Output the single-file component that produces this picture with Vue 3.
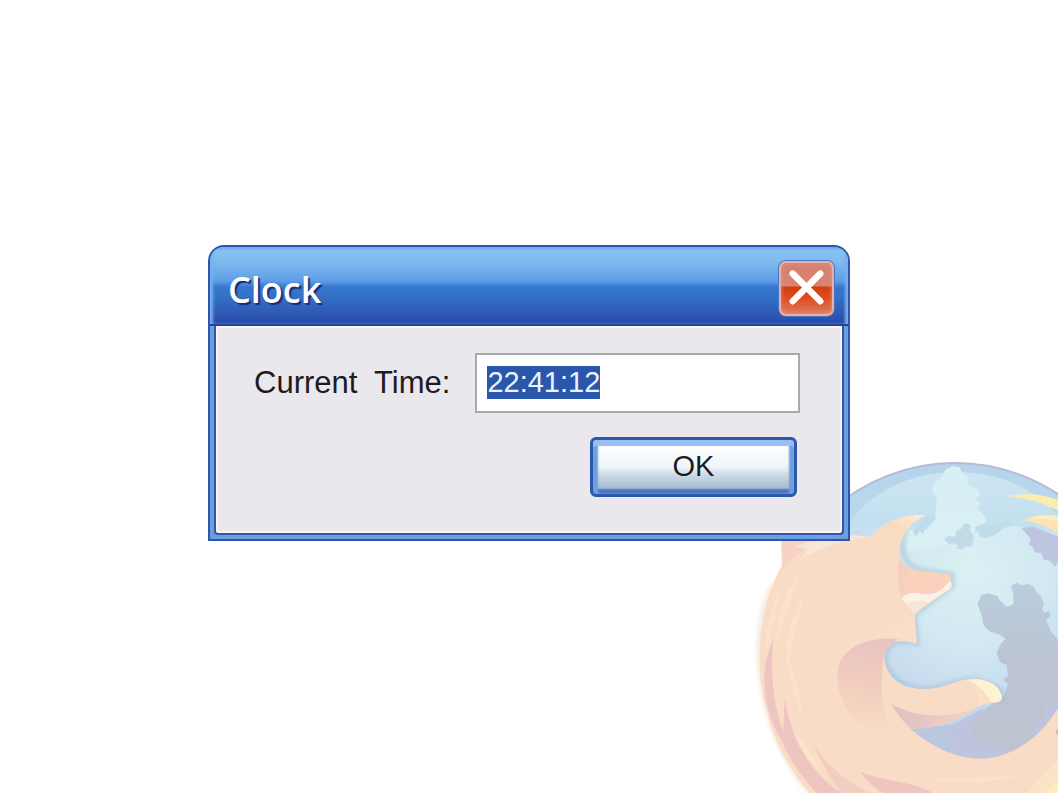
<template>
  <main class="slide">
    <svg class="firefox" viewBox="0 0 954 1029" aria-hidden="true">
      <defs>
        <radialGradient id="ocean" gradientUnits="userSpaceOnUse" cx="700" cy="360" r="560">
          <stop offset="0" stop-color="#daf1f4" />
          <stop offset="0.4" stop-color="#d3e8f2" />
          <stop offset="0.75" stop-color="#c3d9ee" />
          <stop offset="1" stop-color="#bccfe8" />
        </radialGradient>
        <linearGradient id="rim" x1="0" y1="0" x2="0" y2="1">
          <stop offset="0" stop-color="#b5d4ea" />
          <stop offset="0.3" stop-color="#c0def0" />
        </linearGradient>
        <linearGradient id="gloss" gradientUnits="userSpaceOnUse" x1="0" y1="60" x2="0" y2="300">
          <stop offset="0" stop-color="#cde5f1" />
          <stop offset="0.7" stop-color="#c3e0f0" />
          <stop offset="1" stop-color="#d9f0f4" />
        </linearGradient>
        <linearGradient id="ice" gradientUnits="userSpaceOnUse" x1="0" y1="50" x2="0" y2="280">
          <stop offset="0" stop-color="#d8eff4" />
          <stop offset="1" stop-color="#d8f1f4" />
        </linearGradient>
        <linearGradient id="land" gradientUnits="userSpaceOnUse" x1="0" y1="400" x2="0" y2="900">
          <stop offset="0" stop-color="#b9cddd" />
          <stop offset="0.5" stop-color="#bcc3d3" />
          <stop offset="1" stop-color="#bfc3d0" />
        </linearGradient>
        <linearGradient id="hollow" gradientUnits="userSpaceOnUse" x1="400" y1="570" x2="370" y2="840">
          <stop offset="0" stop-color="#e9c3c1" />
          <stop offset="0.5" stop-color="#f1cdbd" />
          <stop offset="1" stop-color="#f8dcc5" />
        </linearGradient>
        <linearGradient id="ear" gradientUnits="userSpaceOnUse" x1="540" y1="190" x2="430" y2="330">
          <stop offset="0" stop-color="#fdecd4" />
          <stop offset="0.4" stop-color="#f8dcc1" />
          <stop offset="1" stop-color="#f8dcc5" />
        </linearGradient>
        <linearGradient id="underpaw" gradientUnits="userSpaceOnUse" x1="480" y1="800" x2="720" y2="780">
          <stop offset="0" stop-color="#dfc1c3" />
          <stop offset="1" stop-color="#f6d3c0" />
        </linearGradient>
        <filter id="soft" x="-10%" y="-10%" width="120%" height="120%">
          <feGaussianBlur stdDeviation="7" />
        </filter>
        <clipPath id="sphere">
          <circle cx="645" cy="597" r="560" />
        </clipPath>
      </defs>

      <!-- globe -->
      <circle cx="645" cy="597" r="559" fill="url(#rim)" />
      <g clip-path="url(#sphere)">
        <path d="M330 215 C400 120 520 66 650 66 C780 66 895 120 960 205 V300 H330Z" fill="url(#gloss)" />
        <path d="M330 245 C480 205 590 275 690 255 C790 205 860 220 960 290 V1029 H330Z" fill="url(#ocean)" />
        <path
          d="M618 58 L640 48 L660 52 L666 72 L684 82 L686 108 L712 116 L720 134 L708 148 L720 160 L712 176 L730 192 L740 212 L724 226 L706 228 L704 250 L650 280 L500 300 L510 240 L560 240 L586 200 L590 140 L576 122 L584 94 L600 88Z"
          fill="url(#ice)"
        />
        <path
          d="M518 246 L552 202 L590 200 L572 226 L558 226 L550 252 L538 244 L530 260Z M648 244 L664 236 L668 224 L684 220 L694 228 L690 240 L702 258 L696 290 L680 288 L668 298 L650 296 L654 286 L638 280 L628 284 L614 268 L624 258 L646 260Z M706 230 L730 222 L748 228 L766 216 L800 214 L820 224 L804 230 L790 236 L776 246 L758 258 L736 264 L720 260Z"
          fill="#bfdce8"
        />
        <path
          d="M845 235 L880 230 L960 262 V330 L944 350 L930 332 L912 330 L904 310 L884 306 L878 290 L868 284 L872 266Z"
          fill="#bdc5df"
        />
        <path
          d="M500 838 L640 824 L720 780 L954 740 V960 H560Z"
          fill="#bec4dd"
        />
        <path d="M500 838 L640 824 L632 856 L650 872 L640 905 L560 900Z" fill="#b9c8de" />
        <path
          d="M812 408 L830 398 L844 406 L864 402 L880 408 L890 426 L904 440 L912 458 L906 478 L914 488 L928 484 L932 498 L918 510 L932 542 L954 570 V752 L936 766 L916 764 L910 800 L888 824 L876 850 L880 874 L850 900 L778 906 L800 884 L750 878 L690 852 L704 828 L700 812 L728 800 L740 772 L790 740 L804 702 L790 690 L804 676 L800 646 L780 636 L770 608 L782 582 L796 566 L780 554 L748 544 L730 524 L724 492 L712 462 L724 436 L744 430 L772 438 L780 452 L800 470 L820 462 L820 430Z"
          fill="url(#land)"
        />
      </g>
      <circle cx="645" cy="597" r="558" fill="none" stroke="#b6b9da" stroke-width="6" />

      <!-- shadow thrown on the globe by the head and tail -->
      <path
        d="M496 220 C474 300 490 350 545 360 L636 372 L638 408 L524 494 L532 580 C480 570 440 575 434 620 C440 690 510 722 570 716 C650 700 700 665 780 720 L790 750"
        fill="none" stroke="#91aebe" stroke-width="12" opacity="0.5" filter="url(#soft)"
      />

      <!-- fur outline glow -->
      <path d="M100 400 C52 500 52 590 66 700 C88 840 134 940 218 1040" fill="none" stroke="#f4e3d8" stroke-width="12" filter="url(#soft)" />

      <!-- body -->
      <path
        d="M124 262 H330 L395 260 C430 215 480 195 558 195 C500 222 474 270 478 320 C476 370 478 410 486 446 L524 494 C522 525 532 552 529 582 C490 566 450 570 434 600 C426 630 438 670 470 694 C505 720 550 720 590 714 C640 702 680 676 730 690 C765 700 785 725 786 750 C770 758 745 758 720 768 C670 800 610 838 512 836 C570 890 650 925 720 926 C800 926 890 880 954 775 V1029 H210 C130 940 85 840 64 705 C50 600 62 460 126 345Z"
        fill="#f8dcc5"
      />
      <path d="M330 254 L395 260 C430 215 480 195 558 195 C500 222 474 270 478 330 L400 400 L330 330Z" fill="url(#ear)" />
      <path d="M124 262 L235 268 C190 300 155 325 126 360Z" fill="#f8d2c4" />
      <path d="M166 290 C230 262 320 248 398 262 C330 264 240 288 170 338 C205 304 220 292 166 290Z" fill="#fae6d8" />

      <!-- muzzle -->
      <path d="M478 325 C488 350 515 362 550 364 L626 372 C638 380 632 396 618 408 C595 438 540 430 486 446 C472 410 474 365 478 325Z" fill="#f9d1bd" />
      <path d="M478 325 C490 350 500 356 510 360 C492 390 488 420 486 446 C472 410 474 365 478 325Z" fill="#f6cec1" />
      <path d="M484 446 C500 426 530 426 552 434 C590 438 612 412 630 392 C640 406 634 416 616 426 L560 464 C545 474 532 484 524 494 C514 480 498 460 484 446Z" fill="#fdf1e6" />
      <path d="M498 462 C520 450 550 450 568 458 C550 470 534 482 524 494Z" fill="#fae4d4" />
      <path d="M420 560 C450 530 490 500 524 494 C520 530 533 552 529 582 C490 562 450 560 420 560Z" fill="#f9dfc9" />

      <!-- hollow between head and tail -->
      <path d="M475 568 C400 560 330 580 300 635 C280 690 300 770 360 825 L450 850 C430 790 420 720 428 665 C426 620 445 585 475 568Z" fill="url(#hollow)" />
      <path d="M432 610 C418 690 430 770 470 850 L510 840 L455 762 L480 702 C445 680 432 650 432 610Z" fill="#f8dcc5" />

      <!-- tail -->
      <path d="M453 762 C520 800 600 802 660 790 L714 770 C660 805 600 838 512 836 C490 816 470 790 453 762Z" fill="url(#underpaw)" />
      <path d="M680 690 C730 680 778 700 786 740 C784 756 772 760 752 756 C735 724 715 702 680 690Z" fill="#fdf2d3" />
      <path d="M700 700 C720 716 732 736 738 760 L714 768 C720 740 716 720 700 700Z" fill="#fae2c4" />

      <!-- fur strokes -->
      <path d="M100 570 C60 650 60 760 128 880 C150 930 190 990 230 1029 H306 C240 990 190 920 165 860 C148 810 140 780 134 745 L130 845 C98 760 90 660 100 570Z" fill="#efc5c2" />
      <path d="M204 848 C235 920 300 985 390 1029 H306 C270 990 235 920 204 848Z" fill="#f4cdc1" />
      <path d="M362 965 C430 995 510 990 580 1029 H430 C400 1015 380 990 362 965Z" fill="#efc5bf" />
      <path d="M165 848 C185 900 215 940 240 965 C228 930 200 890 165 848Z" fill="#fae6cb" />
      <path d="M128 405 C92 470 78 530 76 600 C95 550 102 510 128 405Z M175 380 C125 440 112 500 108 580 C130 520 150 470 175 380Z M195 430 C145 510 132 590 142 680 C152 590 175 520 195 430Z M145 610 C145 700 175 760 184 800 C186 730 165 690 145 610Z" fill="#fae3ca" />
      <path d="M565 990 C680 1005 770 995 830 978 C750 980 660 985 565 990Z" fill="#fae3cc" />
      <path d="M954 930 L860 1029 H954Z" fill="#fae4c4" />
      <path d="M954 990 L918 1029 H954Z" fill="#fcefbd" />
      <path d="M954 832 L946 850 L954 854Z" fill="#a7c4cd" />

      <!-- tail tips on the right -->
      <path d="M802 138 C860 128 910 132 954 150 V182 C915 160 860 145 802 138Z" fill="#fdecaf" />
      <path d="M848 210 C885 196 920 194 954 198 V250 C920 230 890 218 848 210Z" fill="#fbe3b6" />
      <path d="M870 203 C900 194 930 194 954 198 V215 C920 204 895 204 870 203Z" fill="#fdefbb" />
    </svg>

    <form class="dialog" role="dialog" aria-labelledby="dialog-title" @submit.prevent>
      <header class="titlebar">
        <h1 id="dialog-title" class="title">Clock</h1>
        <button type="button" class="close" aria-label="Close">
          <svg class="close-icon" viewBox="0 0 48 48">
            <path d="M11 10 L37 36 M37 10 L11 36" />
          </svg>
        </button>
      </header>
      <div class="content">
        <div class="row">
          <label for="time" class="label">Current&nbsp; Time:</label>
          <input id="time" ref="field" v-model="time" type="text" class="field" />
        </div>
        <div class="actions">
          <button type="submit" class="ok">OK</button>
        </div>
      </div>
    </form>
  </main>
</template>

<script setup>
import { ref, onMounted } from 'vue'

const time = ref('22:41:12')
const field = ref(null)

onMounted(() => {
  field.value.focus()
  field.value.select()
})
</script>

<style>
body {
  margin: 0;
  background: #fff;
}
</style>

<style scoped>
.slide {
  position: relative;
  display: flex;
  align-items: center;
  justify-content: center;
  min-height: 100vh;
  padding-bottom: 8px;
  box-sizing: border-box;
  overflow: hidden;
  font-family: 'Liberation Sans', Arial, sans-serif;
}

.firefox {
  position: absolute;
  right: 0;
  bottom: 0;
  width: 318px;
}

.dialog {
  position: relative;
  width: 100%;
  max-width: 642px;
  box-sizing: border-box;
  border: 2px solid #2f55ae;
  border-radius: 16px 16px 0 0;
  background: #6a9fe0;
  overflow: hidden;
}

.titlebar {
  display: flex;
  align-items: center;
  justify-content: space-between;
  height: 79px;
  padding: 6px 14px 0 18px;
  box-sizing: border-box;
  border-bottom: 2px solid #24429c;
  background: linear-gradient(
    #6cabe9 0,
    #84c2f0 4px,
    #80bcee 14px,
    #5f9de6 34px,
    #3478cf 40px,
    #3470c6 50px,
    #2b51ae 72px,
    #274aa4 100%
  );
  box-shadow: inset 4px 0 3px -1px #78b0ec, inset -4px 0 3px -1px #78b0ec;
}

.title {
  margin: 0;
  padding-top: 4px;
  color: #fff;
  font-family: 'Open Sans', 'Noto Sans', sans-serif;
  font-size: 36px;
  font-weight: 600;
  line-height: 48px;
  text-shadow: 2px 2px 1px #1a2b7c;
}

.close {
  width: 55px;
  height: 55px;
  padding: 0;
  border: 2px solid #e8b0a6;
  border-radius: 7px;
  background: linear-gradient(#d5816f 0, #d98471 44%, #d03f0d 48%, #dc4b1c 68%, #df7c60 100%);
  box-shadow: 0 0 0 1px #4776c8, inset 0 0 4px #e79581;
}

.close-icon {
  display: block;
  width: 100%;
  fill: none;
  stroke: #fff;
  stroke-width: 6;
  stroke-linecap: round;
}

.content {
  margin: 0 4px 4px;
  padding: 27px 42px 36px 38px;
  border: 2px solid #3455a8;
  border-top: 0;
  border-radius: 0 0 4px 4px;
  background: #eae8ed;
  box-shadow: inset 0 0 0 2px #f8f4f5;
}

.row {
  display: flex;
  align-items: center;
  gap: 25px;
}

.label {
  color: #1c1c1f;
  font-size: 31px;
  line-height: 33px;
  white-space: nowrap;
}

.field {
  flex: 1;
  min-width: 0;
  height: 60px;
  box-sizing: border-box;
  padding: 0 10px;
  border: 2px solid #a9a9ae;
  outline: none;
  background: #fff;
  color: #1c1c1f;
  font-family: inherit;
  font-size: 29px;
  line-height: 33px;
}

.field::selection {
  background: #2a57ab;
  color: #eaf3ff;
}

.actions {
  display: flex;
  justify-content: flex-end;
  margin-top: 24px;
  padding-right: 3px;
}

.ok {
  width: 207px;
  height: 60px;
  padding: 0;
  border: 3px solid #2c57ae;
  border-radius: 6px;
  background: linear-gradient(#fff 10%, #eef5f9 50%, #ccd9e6 65%, #a9bacf 90%);
  box-shadow: inset 0 6px 1px #98bfee, inset 5px 0 2px #6f9edb, inset -5px 0 2px #6f9edb, inset 0 -5px 2px #4a76c0;
  color: #1c1c1f;
  font-family: inherit;
  font-size: 29px;
  line-height: 33px;
}
</style>
